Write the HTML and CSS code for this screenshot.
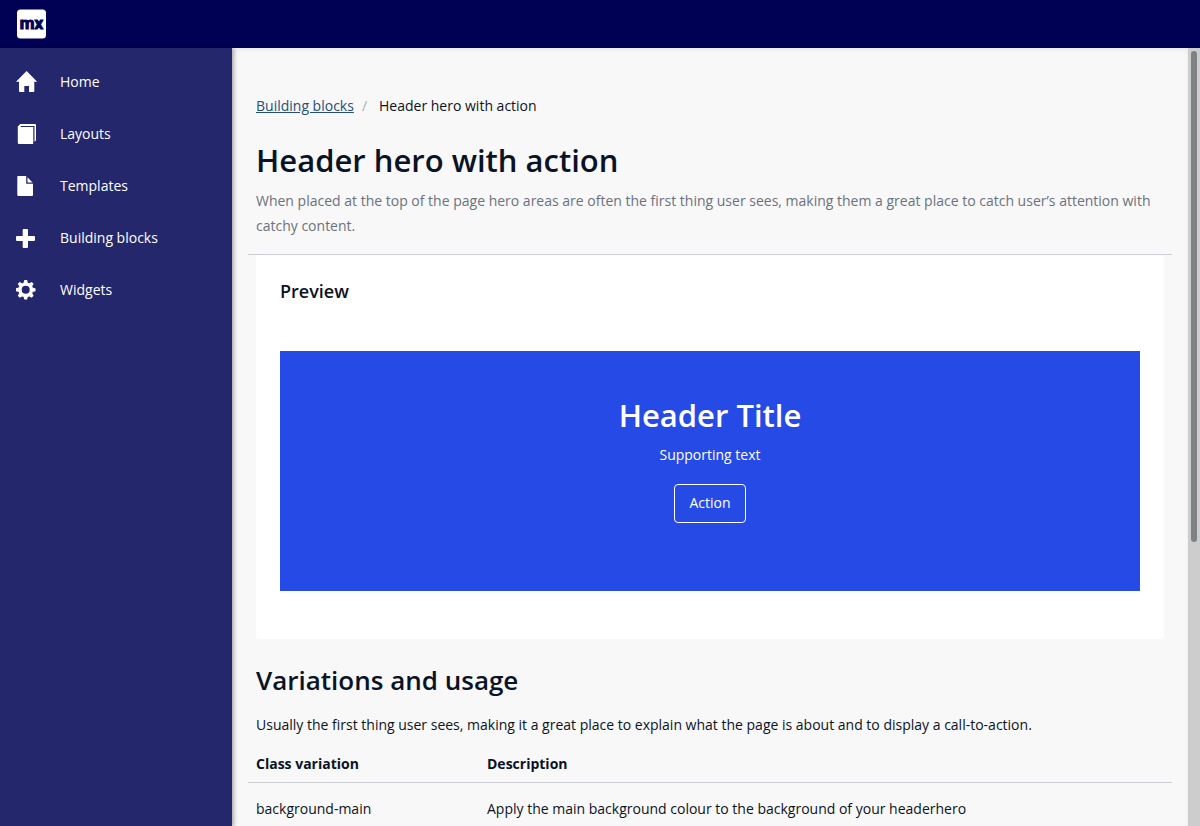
FILE: index.html
```html
<!DOCTYPE html>
<html lang="en">
<head>
<meta charset="utf-8">
<meta name="viewport" content="width=device-width, initial-scale=1">
<title>Header hero with action</title>
<link rel="stylesheet" href="styles.css">
</head>
<body>
<header class="topbar">
  <a class="logo" href="#" aria-label="Mendix home">
    <svg width="30" height="30" viewBox="0 0 30 30">
      <rect width="29" height="29" y=".5" rx="3.5" fill="#fff"/>
      <text class="logo-text" x="14.5" y="20" text-anchor="middle">mx</text>
    </svg>
  </a>
</header>
<div class="shell">
  <nav class="sidebar" aria-label="Main">
    <a class="nav-item" href="#">
      <svg class="nav-icon" viewBox="0 0 22 22"><path d="M10.6 0 L21.2 10.7 H18.3 V20 Q18.3 21 17.3 21 H13 V15 H8.3 V21 H4 Q3 21 3 20 V10.7 H0 Z"/></svg>
      <span>Home</span>
    </a>
    <a class="nav-item" href="#">
      <svg class="nav-icon" viewBox="0 0 22 22"><path d="M1.8 3.5 L4.2 1 H19 Q20 1 20 2 V17.5 L17.2 19.5 V21 H3 Q1.8 21 1.8 19.8 Z"/><path class="icon-gap" d="M4.7 3.5 H17.9 V20"/></svg>
      <span>Layouts</span>
    </a>
    <a class="nav-item" href="#">
      <svg class="nav-icon" viewBox="0 0 22 22"><path d="M2 1 H10.2 V8.8 H17 V20 Q17 21 16 21 H2.3 Q1.3 21 1.3 20 V1.7 Q1.3 1 2 1 Z"/><path d="M11.5 2.3 L16.5 7.4 H11.5 Z"/></svg>
      <span>Templates</span>
    </a>
    <a class="nav-item" href="#">
      <svg class="nav-icon" viewBox="0 0 22 22"><path d="M7.5 2 H11 Q12 2 12 3 V9 H18 Q19 9 19 10 V13 Q19 14 18 14 H12 V20 Q12 21 11 21 H7.5 Q6.7 21 6.7 20 V14 H1 Q0 14 0 13 V10 Q0 9 1 9 H6.7 V3 Q6.7 2 7.5 2 Z"/></svg>
      <span>Building blocks</span>
    </a>
    <a class="nav-item" href="#">
      <svg class="nav-icon" viewBox="0 0 22 22"><g transform="translate(9.7 10.8)"><circle r="5.7" fill="none" stroke="#fff" stroke-width="3.4"/><path id="tooth" d="M-2.2 -6.8 L-1.4 -9.8 H1.4 L2.2 -6.8 Z"/><use href="#tooth" transform="rotate(45)"/><use href="#tooth" transform="rotate(90)"/><use href="#tooth" transform="rotate(135)"/><use href="#tooth" transform="rotate(180)"/><use href="#tooth" transform="rotate(225)"/><use href="#tooth" transform="rotate(270)"/><use href="#tooth" transform="rotate(315)"/></g></svg>
      <span>Widgets</span>
    </a>
  </nav>
  <main class="content">
    <nav class="breadcrumb" aria-label="Breadcrumb">
      <a href="#">Building blocks</a>
      <span class="separator">/</span>
      <span>Header hero with action</span>
    </nav>
    <div class="page-head">
      <h1>Header hero with action</h1>
      <p>When placed at the top of the page hero areas are often the first thing user sees, making them a great place to catch user’s attention with catchy content.</p>
    </div>
    <section class="card">
      <h2 class="card-title">Preview</h2>
      <div class="hero">
        <h2 class="hero-title">Header Title</h2>
        <p>Supporting text</p>
        <button type="button">Action</button>
      </div>
    </section>
    <section class="usage">
      <h2 class="usage-title">Variations and usage</h2>
      <p>Usually the first thing user sees, making it a great place to explain what the page is about and to display a call-to-action.</p>
      <table>
        <thead>
          <tr><th scope="col">Class variation</th><th scope="col">Description</th></tr>
        </thead>
        <tbody>
          <tr><td>background-main</td><td>Apply the main background colour to the background of your headerhero</td></tr>
        </tbody>
      </table>
    </section>
  </main>
  <div class="scroll-track" aria-hidden="true"><div class="scroll-thumb"></div></div>
</div>
</body>
</html>
```

FILE: styles.css
```css
* { box-sizing: border-box; }

body {
  margin: 0;
  height: 100vh;
  display: flex;
  flex-direction: column;
  overflow: hidden;
  background: #f8f8f8;
  color: #0a1325;
  font: 14px/20px "Open Sans", sans-serif;
}

h1, h2, p { margin: 0; }
h1, h2 { font-weight: 600; }

.topbar {
  flex: none;
  height: 48px;
  display: flex;
  align-items: center;
  padding: 0 17px;
  background: #000155;
}
.logo, .logo svg { display: block; }
.logo-text {
  font: 700 17px Roboto, sans-serif;
  fill: #000155;
  stroke: #000155;
  stroke-width: 1px;
}

.shell {
  flex: 1;
  min-height: 0;
  display: flex;
}

.sidebar {
  flex: none;
  width: 232px;
  padding-top: 8px;
  background: #24276c;
  box-shadow: 2px 0 4px rgba(0, 0, 0, 0.3);
  z-index: 1;
}
.nav-item {
  display: flex;
  align-items: center;
  gap: 22px;
  height: 52px;
  padding: 0 16px;
  color: #fff;
  text-decoration: none;
}
.nav-icon {
  width: 22px;
  height: 22px;
  fill: #fff;
}
.icon-gap {
  fill: none;
  stroke: #24276c;
  stroke-width: 1.2px;
}

.content {
  flex: 1;
  min-width: 0;
  overflow: hidden;
  padding: 48px 24px 0;
  box-shadow: inset 0 2px 4px rgba(0, 0, 0, 0.06);
}

.breadcrumb { display: flex; }
.breadcrumb a { color: #264f7c; }
.separator {
  padding: 0 12px 0 8px;
  color: #a9acb3;
}

.page-head {
  margin: 24px -8px 0;
  padding: 0 8px 16px;
  border-bottom: 1px solid #ced0d3;
}
.page-head h1 {
  margin-bottom: 8px;
  font-size: 31px;
  line-height: 40px;
}
.page-head p {
  color: #6c7180;
  line-height: 25px;
}

.card {
  padding: 24px 24px 48px;
  border-radius: 4px;
  background: #fff;
}
.card-title {
  font-size: 18px;
  line-height: 24px;
}
.hero {
  display: flex;
  flex-direction: column;
  align-items: center;
  height: 240px;
  margin-top: 48px;
  padding-top: 44px;
  background: #264ae5;
  color: #fff;
}
.hero-title {
  margin-bottom: 10px;
  font-size: 31px;
  line-height: 40px;
}
.hero button {
  margin-top: 19px;
  padding: 8px 14px 9px;
  border: 1px solid #fff;
  border-radius: 4px;
  background: transparent;
  color: #fff;
  font: inherit;
}

.usage { padding-top: 24px; }
.usage-title {
  margin-bottom: 18px;
  font-size: 26px;
  line-height: 34px;
}
table {
  width: calc(100% + 16px);
  margin: 11px -8px 0;
  border-collapse: collapse;
  table-layout: fixed;
}
th, td {
  padding: 8px;
  text-align: left;
}
th {
  border-bottom: 1px solid #ced0d3;
  font-weight: 700;
}
th:first-child { width: 25%; }
td { padding-top: 16px; }

.scroll-track {
  flex: none;
  width: 12px;
  padding: 3px;
  background: #cdcdcd;
}
.scroll-thumb {
  height: 63.6%;
  border-radius: 3px;
  background: #7f8283;
}
```
